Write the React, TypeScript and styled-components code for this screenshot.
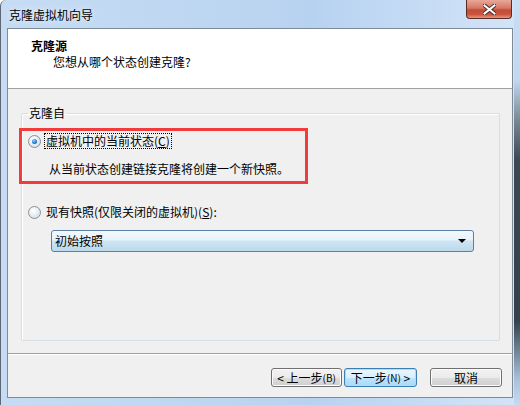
import React from "react";
import styled, { createGlobalStyle, css } from "styled-components";

const Global = createGlobalStyle`
  html, body { margin: 0; padding: 0; background: #ffffff; }
  body { font-family: "Noto Sans CJK SC", "Noto Sans", sans-serif; font-size: 12px; color: #000; }
  * { box-sizing: border-box; }
`;

const Window = styled.div`
  width: 520px;
  height: 405px;
  display: flex;
  flex-direction: column;
  padding: 0 7px 7px 6px;
  border-left: 1px solid #5d6874;
  border-top-left-radius: 6px;
  background:
    linear-gradient(to bottom, #c9ddf3 0, #c2d8f0 80px, #7b8894 120px, #3c4852 160px, #34404a 320px, #a9c2dc 380px, #c6dbf2 405px) right top / 6px 100% no-repeat,
    linear-gradient(to right, #c6dcf4 0, #bcd5f0 45%, #b7d2f1 60%, #d3e4f7 100%);
`;

const TitleBar = styled.div`
  height: 28px;
  display: flex;
  align-items: flex-start;
  margin-left: -6px;
  margin-right: -7px;
  padding-left: 8px;
`;

const TitleText = styled.div`
  line-height: 16px;
  margin-top: 7px;
  color: #000;
  text-shadow: 0 0 6px rgba(255, 255, 255, 0.9);
`;

const CloseButton = styled.div`
  margin-left: auto;
  margin-right: 8px;
  width: 46px;
  height: 19px;
  border: 1px solid #5a2a24;
  border-top: none;
  border-radius: 0 0 4px 4px;
  background: linear-gradient(to bottom, #e9a897 0, #d57866 45%, #c44c37 55%, #c9553f 80%, #e39a7f 100%);
  display: flex;
  align-items: center;
  justify-content: center;
`;

const Client = styled.div`
  position: relative;
  flex: 1;
  display: flex;
  flex-direction: column;
  border: 1px solid #7d8a97;
  background: #f0f0f0;
`;

const Header = styled.div`
  height: 60px;
  background: #ffffff;
  border-bottom: 1px solid #a0a0a0;
  padding: 9px 0 0 23px;
`;

const HeaderTitle = styled.div`
  font-weight: bold;
  line-height: 16px;
`;

const HeaderSub = styled.div`
  line-height: 16px;
  padding-left: 22px;
`;

const Body = styled.div`
  flex: 1;
  display: flex;
  flex-direction: column;
`;

const Group = styled.fieldset`
  flex: 1;
  margin: 16px 12px 12px 13px;
  padding: 12px 6px 0 6px;
  border: 1px solid #d5dfe5;
  border-radius: 2px;
  box-shadow: inset 1px 1px 0 #ffffff;
  min-width: 0;
`;

const Legend = styled.legend`
  padding: 0 1px;
  line-height: 16px;
`;

const OptionRow = styled.div<{ $top?: number }>`
  display: flex;
  align-items: center;
  height: 16px;
  margin-top: ${(p) => p.$top ?? 0}px;
`;

const RadioCircle = styled.span<{ $checked?: boolean }>`
  position: relative;
  width: 13px;
  height: 13px;
  border-radius: 50%;
  border: 1px solid #8e8f8f;
  background: radial-gradient(circle at 40% 35%, #ffffff 0, #eef3f7 35%, #c4d6e4 100%);
  margin-right: 3px;
  flex: none;
  ${(p) =>
    p.$checked &&
    css`
      &::after {
        content: "";
        position: absolute;
        left: 3px;
        top: 3px;
        width: 5px;
        height: 5px;
        border-radius: 50%;
        background: radial-gradient(circle at 40% 35%, #a9dcff 0, #2a86dc 45%, #0b3f86 100%);
      }
    `}
`;

const Label = styled.span<{ $focused?: boolean }>`
  line-height: 14px;
  padding: 0 1px;
  border: 1px dotted ${(p) => (p.$focused ? "#000" : "transparent")};
  white-space: nowrap;
`;

const U = styled.span`
  text-decoration: underline;
`;

const Description = styled.div`
  margin-top: 12px;
  line-height: 16px;
  padding-left: 21px;
`;

const Combo = styled.div`
  margin: 10px 0 0 23px;
  width: 423px;
  height: 22px;
  border: 1px solid #5d7fa3;
  border-radius: 3px;
  background: linear-gradient(to bottom, #f3f9fd 0, #e6f2fa 45%, #cfe5f3 50%, #bcd9ec 100%);
  display: flex;
  align-items: center;
  padding: 0 6px 0 3px;
`;

const ComboText = styled.span`
  flex: 1;
  line-height: 16px;
`;

const ComboArrow = styled.span`
  width: 0;
  height: 0;
  border-left: 4px solid transparent;
  border-right: 4px solid transparent;
  border-top: 4px solid #000;
  margin-right: 1px;
`;

const Footer = styled.div`
  height: 44px;
  border-top: 1px solid #a0a0a0;
  box-shadow: inset 0 1px 0 #ffffff;
  display: flex;
  align-items: flex-start;
  justify-content: flex-end;
  padding: 14px 10px 0 0;
`;

const Button = styled.div<{ $w: number; $focused?: boolean; $gap?: number }>`
  width: ${(p) => p.$w}px;
  height: 19px;
  margin-left: ${(p) => p.$gap ?? 0}px;
  border: 1px solid ${(p) => (p.$focused ? "#3c7fb1" : "#707070")};
  border-radius: 3px;
  background: ${(p) =>
    p.$focused
      ? "linear-gradient(to bottom, #eaf6fd 0, #d9f0fc 50%, #bee6fd 51%, #a7d9f5 100%)"
      : "linear-gradient(to bottom, #f2f2f2 0, #ebebeb 50%, #dddddd 51%, #cfcfcf 100%)"};
  box-shadow: inset 0 0 0 1px ${(p) => (p.$focused ? "#a9e0f9" : "#fcfcfc")};
  display: flex;
  align-items: center;
  justify-content: center;
  line-height: 14px;
  white-space: nowrap;
`;

const Small = styled.span`
  font-size: 10px;
`;

const Annotation = styled.div`
  position: absolute;
  left: 11px;
  top: 99px;
  width: 289px;
  height: 56px;
  border: 3px solid #f23b3b;
  pointer-events: none;
`;

export default function App() {
  return (
    <>
      <Global />
      <Window>
        <TitleBar>
          <TitleText>克隆虚拟机向导</TitleText>
          <CloseButton>
            <svg width="13" height="11" viewBox="0 0 13 11">
              <path
                d="M1.5 1.5 L11.5 9.5 M11.5 1.5 L1.5 9.5"
                stroke="#4a2a26"
                strokeWidth="4"
                strokeLinecap="square"
              />
              <path
                d="M1.5 1.5 L11.5 9.5 M11.5 1.5 L1.5 9.5"
                stroke="#ffffff"
                strokeWidth="2"
                strokeLinecap="square"
              />
            </svg>
          </CloseButton>
        </TitleBar>
        <Client>
          <Header>
            <HeaderTitle>克隆源</HeaderTitle>
            <HeaderSub>您想从哪个状态创建克隆?</HeaderSub>
          </Header>
          <Body>
            <Group>
              <Legend>克隆自</Legend>
              <OptionRow>
                <RadioCircle $checked />
                <Label $focused>
                  虚拟机中的当前状态(<U>C</U>)
                </Label>
              </OptionRow>
              <Description>从当前状态创建链接克隆将创建一个新快照。</Description>
              <OptionRow $top={27}>
                <RadioCircle />
                <Label>
                  现有快照(仅限关闭的虚拟机)(<U>S</U>):
                </Label>
              </OptionRow>
              <Combo>
                <ComboText>初始按照</ComboText>
                <ComboArrow />
              </Combo>
            </Group>
          </Body>
          <Footer>
            <Button $w={71}>
              &lt; 上一步<Small>(B)</Small>
            </Button>
            <Button $w={73} $gap={2} $focused>
              下一步<Small>(N)</Small>&nbsp;&gt;
            </Button>
            <Button $w={72} $gap={13}>
              取消
            </Button>
          </Footer>
          <Annotation />
        </Client>
      </Window>
    </>
  );
}
